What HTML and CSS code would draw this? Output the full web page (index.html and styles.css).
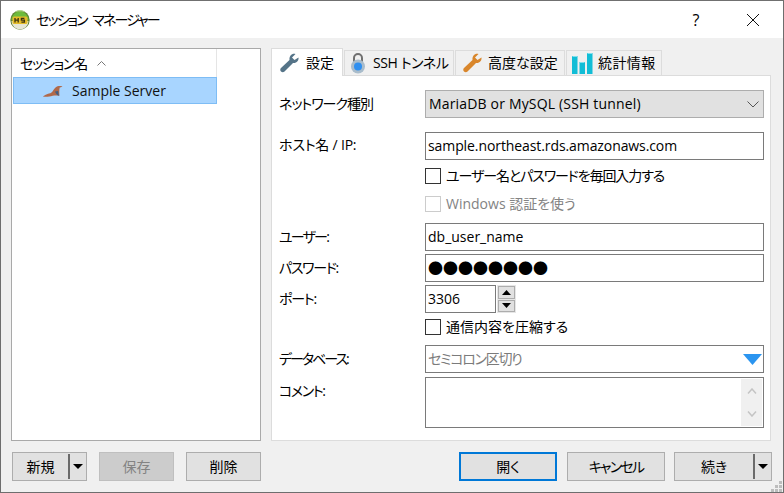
FILE: index.html
```html
<!DOCTYPE html>
<html lang="ja">
<head>
<meta charset="utf-8">
<title>セッション マネージャー</title>
<link rel="stylesheet" href="styles.css">
</head>
<body>
<div class="window">
  <header class="titlebar">
    <svg class="app-icon" width="20" height="20" viewBox="0 0 20 20">
      <circle cx="10" cy="10" r="9.700" fill="#5f7f30"/>
      <path d="M1.500 10a8.500 8.500 0 0 1 17 0z" fill="#6dbb3c"/>
      <path d="M1.500 11a8.500 8.500 0 0 0 17 0z" fill="#e6e6d6"/>
      <path d="M4 2.800a8 8 0 0 1 12 0c-3-1.600-9-1.600-12 0z" fill="#b5e08a"/>
      <rect x="2.500" y="6.500" width="15" height="7.500" rx="1.500" fill="#e4bc2a"/>
      <path d="M5 8v4.500M5 10.200h3.200M8.200 8v4.500M14.400 8.300h-3v1.900h3v2h-3" fill="none" stroke="#3c3410" stroke-width="1.300"/>
    </svg>
    <span class="title">セッション マネージャー</span>
    <span class="help">?</span>
    <svg class="close" width="14" height="14" viewBox="0 0 14 14"><path d="M1 1l12 12M13 1L1 13" stroke="#111" stroke-width="1" fill="none"/></svg>
  </header>

  <main class="content">
    <div class="columns">
      <section class="tree">
        <div class="tree-head"><div class="tree-col"><span class="tree-name">セッション名</span>
          <svg width="9" height="5" viewBox="0 0 9 5"><path d="M.5 4.500l4-4 4 4" fill="none" stroke="#777"/></svg>
        </div></div>
        <div class="tree-row">
          <svg class="seal" width="20" height="12" viewBox="0 0 20 12"><path d="M0 11.300c1.500-.8 2.800-1.800 4.500-2.300 2-.6 3.800-.8 5-2.500C11 4.300 12.500 2 14.500 1.300c1.500-.5 3-.4 5-.3l-1.500 1.300-1.300.3c-.6 2.500-.5 5.500-.2 8.200-1.600-.2-3-.4-5-.3-2.500.1-4.500 1.200-7 1.300-1.800.1-3.300 0-4.500-.3z" fill="#b0694a"/><path d="M12 6.500c.5 1.500 1.500 3 3.800 4.500l-.6-5z" fill="#3f5f85"/></svg>
          <span>Sample Server</span>
        </div>
      </section>

      <section class="details">
        <nav class="tabs">
          <div class="tab active">
            <svg width="22" height="22" viewBox="0 0 22 22"><path d="M20.500 5.500c.5 3-2 6-5.500 5.500L6.500 19.500c-1 1-2.500 1-3.500 0s-1-2.500 0-3.500L11.500 8C11 4 14 1 17.500 2L14 5.500 16.500 8z" fill="#557488"/></svg>
            <span>設定</span>
          </div>
          <div class="tab">
            <svg width="16" height="22" viewBox="0 0 16 22"><path d="M4 10V6a4 4 0 0 1 8 0v4" fill="none" stroke="#6f6f6f" stroke-width="2"/><circle cx="8" cy="14.500" r="7" fill="#a9bccb"/><circle cx="8" cy="14.500" r="4" fill="#2e8ff0"/></svg>
            <span class="ssh">SSH トンネル</span>
          </div>
          <div class="tab">
            <svg width="22" height="22" viewBox="0 0 22 22"><path d="M20.500 5.500c.5 3-2 6-5.500 5.500L6.500 19.500c-1 1-2.500 1-3.500 0s-1-2.500 0-3.500L11.500 8C11 4 14 1 17.500 2L14 5.500 16.500 8z" fill="#d9862b"/></svg>
            <span>高度な設定</span>
          </div>
          <div class="tab">
            <svg width="21" height="22" viewBox="0 0 21 22"><path d="M0 4h5.500v18H0zM7.500 10H13v12H7.500zM15 1h5.500v21H15z" fill="#12bdd6"/><path d="M.5 4.500h4.500M8 10.500h4.500M15.500 1.500H20" stroke="#7fe0ee" fill="none"/></svg>
            <span>統計情報</span>
          </div>
        </nav>
        <div class="panel">
          <div class="form">
            <label class="lbl r-net">ネットワーク種別</label>
            <div class="select r-net"><span class="wide">MariaDB or MySQL (SSH tunnel)</span>
              <svg width="12" height="7" viewBox="0 0 12 7"><path d="M.5.500l5.500 5.500 5.500-5.500" fill="none" stroke="#555"/></svg>
            </div>

            <label class="lbl r-host">ホスト名 / IP:</label>
            <div class="input r-host"><span class="tight">sample.northeast.rds.amazonaws.com</span></div>

            <div class="check r-prompt"><i class="box"></i><span class="prompt-text">ユーザー名とパスワードを毎回入力する</span></div>
            <div class="check disabled r-win"><i class="box"></i>Windows 認証を使う</div>

            <label class="lbl r-user">ユーザー:</label>
            <div class="input r-user">db_user_name</div>

            <label class="lbl r-pass">パスワード:</label>
            <div class="input dots r-pass">●●●●●●●●</div>

            <label class="lbl r-port">ポート:</label>
            <div class="port r-port">
              <div class="input port-input">3306</div>
              <div class="spin">
                <span class="spin-btn"><svg width="9" height="5" viewBox="0 0 9 5"><path d="M4.500 0L9 5H0z" fill="#000"/></svg></span>
                <span class="spin-btn"><svg width="9" height="5" viewBox="0 0 9 5"><path d="M4.500 5L9 0H0z" fill="#000"/></svg></span>
              </div>
            </div>

            <div class="check r-comp"><i class="box"></i>通信内容を圧縮する</div>

            <label class="lbl r-db">データベース:</label>
            <div class="input placeholder db r-db"><span class="db-hint">セミコロン区切り</span>
              <svg width="19" height="11" viewBox="0 0 19 11"><path d="M0 0h19L9.500 11z" fill="#2b95f0"/></svg>
            </div>

            <label class="lbl r-note">コメント:</label>
            <div class="input note r-note">
              <div class="scroll">
                <svg width="10" height="6" viewBox="0 0 10 6"><path d="M1 5.500l4-4.500 4 4.500" fill="none" stroke="#c4c4c4" stroke-width="1.500"/></svg>
                <svg width="10" height="6" viewBox="0 0 10 6"><path d="M1 .5l4 4.500 4-4.500" fill="none" stroke="#c4c4c4" stroke-width="1.500"/></svg>
              </div>
            </div>
          </div>
        </div>
      </section>
    </div>

    <footer class="actions">
      <div class="group left">
        <div class="btn split"><span class="btn-text">新規</span><span class="caret"></span></div>
        <div class="btn off">保存</div>
        <div class="btn">削除</div>
      </div>
      <div class="group right">
        <div class="btn primary">開く</div>
        <div class="btn cancel">キャンセル</div>
        <div class="btn split last"><span class="btn-text">続き</span><span class="caret"></span></div>
      </div>
    </footer>
    <svg class="grip" width="11" height="11" viewBox="0 0 11 11"><path d="M8 0h3v3H8zM4 4h3v3H4zM8 4h3v3H8zM0 8h3v3H0zM4 8h3v3H4zM8 8h3v3H8z" fill="#bdbdbd"/></svg>
  </main>
</div>
</body>
</html>
```
FILE: styles.css
```css
* { box-sizing: border-box; }
html, body { margin: 0; padding: 0; }
body {
  width: 784px; height: 493px; overflow: hidden;
  font: 14px/20px "Open Sans", "Noto Sans CJK JP", sans-serif;
  font-feature-settings: "palt";
  color: #000;
}
.window {
  width: 784px; height: 493px;
  display: flex; flex-direction: column;
  border: 1px solid #6e6e6e;
  border-top-color: #707070;
  background: #f0f0f0;
}
.titlebar {
  height: 37px; flex: none;
  background: #fff;
  display: flex; align-items: center;
  padding: 0 0 0 9px;
}
.app-icon { margin-right: 6px; flex: none; }
.title { flex: 1; letter-spacing: -1.900px; word-spacing: 4px; }
.help { width: 14px; font-size: 16px; margin-right: 43px; text-align: center; }
.close { margin-right: 23px; }
.content {
  flex: 1; position: relative;
  padding: 10px 11px 10px 10px;
  display: flex; flex-direction: column;
}
.columns { display: flex; gap: 10px; height: 393px; }
.tree {
  width: 250px;
  background: #fff;
  border: 1px solid #a9a9a9;
}
.tree-head { height: 28px; padding-left: 1px; }
.tree-col {
  width: 204px; height: 28px;
  padding: 1px 0 0 7px;
  border-right: 1px solid #e5e5e5;
  display: flex; align-items: center; gap: 10px;
}
.tree-name { letter-spacing: -1.200px; }
.tree-row {
  width: 204px; height: 27px; margin-left: 1px;
  background: #a8d5ff;
  border: 1px solid #7ebdf5;
  display: flex; align-items: center;
  padding-left: 29px; gap: 9px;
  color: #111;
}
.seal { flex: none; }
.details { width: 500px; display: flex; flex-direction: column; }
.tabs { display: flex; height: 27px; align-items: flex-end; gap: 1px; position: relative; z-index: 1; }
.tab {
  height: 25px;
  border: 1px solid #dcdcdc; border-bottom: 0;
  background: #f0f0f0;
  display: flex; align-items: center; gap: 6px;
  padding: 0 0 0 5px;
  white-space: nowrap;
}
.tab svg { flex: none; }
.ssh { letter-spacing: -.4px; }
.tab:nth-child(2) { width: 110px; gap: 7px; }
.tab:nth-child(3) { width: 110px; gap: 5px; }
.tab:nth-child(4) { width: 96px; gap: 5px; letter-spacing: .4px; }
.tab.active {
  height: 28px; width: 72px; margin-bottom: -1px;
  background: #fff; padding-left: 6px;
}
.panel {
  flex: 1;
  background: #fff;
  border: 1px solid #dcdcdc;
  padding: 14px 6px 0 7px;
}
.form {
  display: grid;
  grid-template-columns: 146px 339px;
  grid-template-rows: 28px 14px 28px 8px 16px 12px 16px 11px 28px 3px 28px 3px 28px 6px 16px 10px 28px 4px 51px;
}
.lbl { grid-column: 1; line-height: 20px; padding-top: 4px; white-space: nowrap; }
.r-net  { grid-row: 1; }
.r-host { grid-row: 3; }
.r-prompt { grid-row: 5; }
.r-win { grid-row: 7; }
.r-user { grid-row: 9; }
.r-pass { grid-row: 11; }
.r-port { grid-row: 13; }
.r-comp { grid-row: 15; }
.r-db { grid-row: 17; }
.r-note { grid-row: 19; }
.lbl.r-net { letter-spacing: -1px; }
.lbl.r-host { letter-spacing: -.2px; padding-top: 3px; }
.lbl.r-user { letter-spacing: -1.800px; }
.lbl.r-pass { letter-spacing: -1.300px; }
.lbl.r-port { letter-spacing: -1.200px; }
.lbl.r-db { letter-spacing: -2px; }
.lbl.r-note { letter-spacing: -1.400px; }
.prompt-text { letter-spacing: -1.100px; }
.db-hint { letter-spacing: -1.300px; }
.select, .input, .check, .port { grid-column: 2; }
.select {
  background: #e1e1e1; border: 1px solid #adadad;
  display: flex; align-items: center; justify-content: space-between;
  padding: 0 4px 0 3px;
}
.wide { letter-spacing: .17px; }
.tight { letter-spacing: -.09px; }
.input {
  background: #fff; border: 1px solid #7a7a7a;
  padding: 3px 2px; line-height: 20px;
  white-space: nowrap;
}
.dots { font-size: 15px; padding-left: 2px; }
.port { display: flex; gap: 1px; align-items: flex-start; }
.port-input { width: 71px; height: 28px; }
.spin {
  width: 19px; height: 28px;
  background: #e6e6e6;
  padding: 1px;
  display: flex; flex-direction: column; gap: 1px;
}
.spin-btn {
  flex: 1; background: #e1e1e1; border: 1px solid #adadad;
  display: flex; align-items: center; justify-content: center;
}
.check { display: flex; align-items: center; gap: 5px; white-space: nowrap; }
.box { width: 16px; height: 16px; flex: none; border: 1px solid #333; background: #fff; }
.disabled { color: #838383; }
.disabled .box { border-color: #ccc; }
.placeholder { color: #7b7b7b; }
.db { display: flex; align-items: center; justify-content: space-between; padding-right: 1px; }
.note { position: relative; }
.scroll {
  position: absolute; right: 0; top: 0; bottom: 0; width: 21px;
  background: #f0f0f0;
  display: flex; flex-direction: column; align-items: center; justify-content: space-between;
  padding: 9px 0;
  margin: 1px;
}
.actions { display: flex; justify-content: space-between; margin-top: 11px; padding-left: 1px; }
.group { display: flex; }
.left { gap: 12px; }
.right { gap: 10px; }
.btn {
  height: 29px;
  background: #e1e1e1; border: 1px solid #adadad;
  display: flex; align-items: center; justify-content: center;
  width: 75px;
}
.right .btn { width: 98px; }
.right .last { margin-left: -1px; }
.cancel { letter-spacing: -1.800px; }
.off { background: #cccccc; border-color: #bfbfbf; color: #838383; }
.primary { border: 2px solid #0078d7; }
.split { padding: 0; justify-content: flex-start; position: relative; }
.btn-text { flex: 1; text-align: center; }
.caret {
  flex: none; width: 18px; height: 25px;
  border-left: 2px solid #6a6a6a;
  display: flex; align-items: center; justify-content: center;
}
.caret::after {
  content: ""; width: 0; height: 0;
  border: 5px solid transparent; border-top: 5px solid #000; border-bottom: 0;
}
.grip { position: absolute; right: 1px; bottom: 0; }
```
